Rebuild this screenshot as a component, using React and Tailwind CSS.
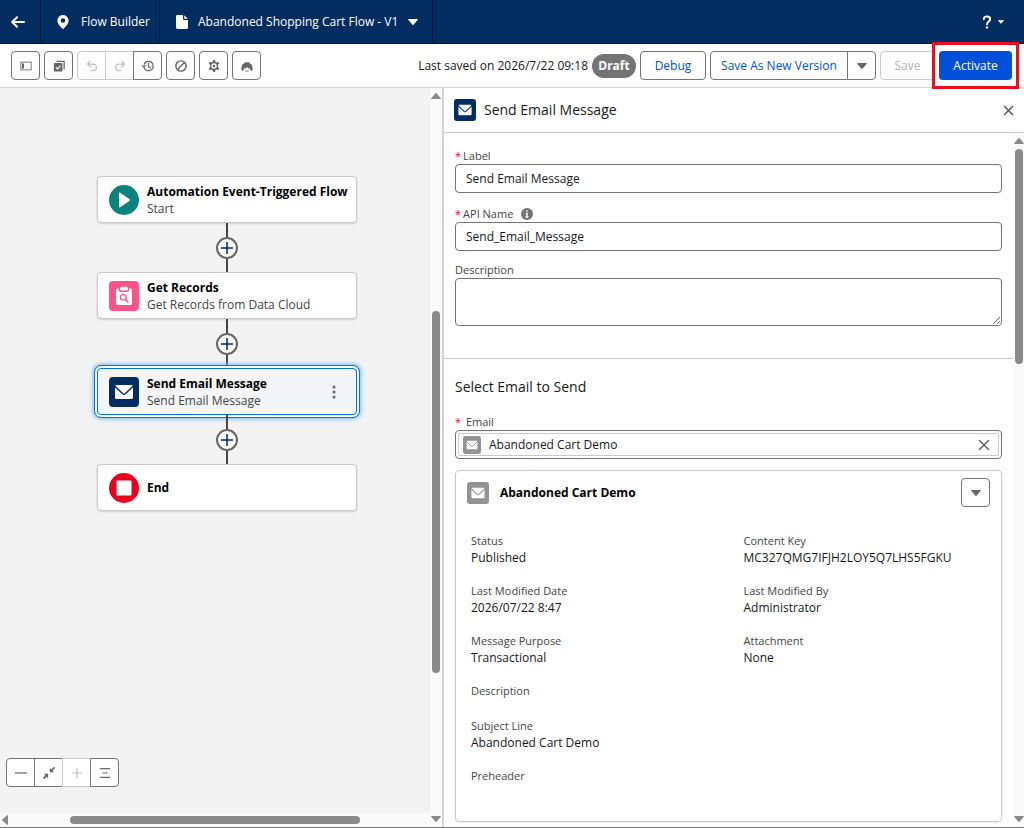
import React, { useState } from 'react';

const emailFields = [
  [{ label: 'Status', value: 'Published' }, { label: 'Content Key', value: 'MC327QMG7IFJH2LOY5Q7LHS5FGKU' }],
  [{ label: 'Last Modified Date', value: '2026/07/22 8:47' }, { label: 'Last Modified By', value: 'Administrator' }],
  [{ label: 'Message Purpose', value: 'Transactional' }, { label: 'Attachment', value: 'None' }],
  [{ label: 'Description', value: '' }],
  [{ label: 'Subject Line', value: 'Abandoned Cart Demo' }],
  [{ label: 'Preheader', value: '' }],
];

function Caret({ className }) {
  return (
    <svg viewBox="0 0 10 6" className={className} fill="currentColor" aria-hidden="true">
      <path d="M.6 0h8.8c.5 0 .7.5.4.8L5.5 5.7c-.3.3-.7.3-1 0L.2.8C-.1.5.1 0 .6 0z" />
    </svg>
  );
}

function CloseIcon({ className }) {
  return (
    <svg viewBox="0 0 12 12" className={className} fill="none" stroke="currentColor" strokeWidth="1.6" strokeLinecap="round" aria-hidden="true">
      <path d="M1.5 1.5l9 9M10.5 1.5l-9 9" />
    </svg>
  );
}

function EmailIcon({ className }) {
  return (
    <svg viewBox="0 0 30 30" className={className} aria-hidden="true">
      <rect width="30" height="30" rx="4" fill="currentColor" />
      <rect x="6" y="8" width="18" height="14" rx="1.6" fill="#fff" />
      <path d="M5.5 9l8.3 7.8c.7.6 1.7.6 2.4 0L24.5 9" fill="none" stroke="currentColor" strokeWidth="1.5" />
    </svg>
  );
}

function StartIcon() {
  return (
    <svg viewBox="0 0 30 30" className="size-[30px] shrink-0" aria-hidden="true">
      <circle cx="15" cy="15" r="15" fill="#0b827c" />
      <path d="M10 8.3c0-.7.7-1 1.2-.6l9.3 6.6c.5.4.5 1 0 1.4l-9.3 6.6c-.5.4-1.2.1-1.2-.6z" fill="#fff" />
    </svg>
  );
}

function RecordsIcon() {
  return (
    <svg viewBox="0 0 30 30" className="size-[30px] shrink-0" aria-hidden="true">
      <rect width="30" height="30" rx="4" fill="#ff538a" />
      <path d="M8.5 7.5h1.2v1.6c0 1 .8 1.8 1.8 1.8h7c1 0 1.8-.8 1.8-1.8V7.5h1.2c.8 0 1.5.7 1.5 1.5v13.5c0 .8-.7 1.5-1.5 1.5h-13C7.7 24 7 23.3 7 22.5V9c0-.8.7-1.5 1.5-1.5z" fill="#fff" />
      <path d="M12.5 5.8h5c.8 0 1.4.6 1.4 1.4v1c0 .8-.6 1.4-1.4 1.4h-5c-.8 0-1.4-.6-1.4-1.4v-1c0-.8.6-1.4 1.4-1.4z" fill="#fff" />
      <circle cx="14.3" cy="16.3" r="2.9" fill="none" stroke="#ff538a" strokeWidth="1.3" />
      <path d="M16.5 18.5l2.5 2.7" stroke="#ff538a" strokeWidth="1.4" strokeLinecap="round" />
    </svg>
  );
}

function EndIcon() {
  return (
    <svg viewBox="0 0 30 30" className="size-[30px] shrink-0" aria-hidden="true">
      <circle cx="15" cy="15" r="15" fill="#ea001e" />
      <rect x="7.5" y="7.5" width="15" height="15" rx="1" fill="#fff" />
    </svg>
  );
}

function IconButton({ label, disabled, className = '', children }) {
  return (
    <button
      type="button"
      aria-label={label}
      disabled={disabled}
      className={`flex h-[29px] w-[29px] items-center justify-center border bg-white ${disabled ? 'border-[#c9c9c9] text-[#c0c0c0]' : 'border-[#747474] text-[#666666]'} ${className}`}
    >
      <svg viewBox="0 0 14 14" className="size-3" fill="none" stroke="currentColor" strokeWidth="1.4" aria-hidden="true">
        {children}
      </svg>
    </button>
  );
}

function Header() {
  return (
    <header className="flex h-11 shrink-0 items-stretch border-b border-[#001639] bg-[#032d60] text-white">
      <a href="#back" aria-label="Back" className="flex w-[41px] items-center justify-center border-r border-[#001a42] pr-1">
        <svg viewBox="0 0 14 12" className="h-3 w-3.5" fill="none" stroke="currentColor" strokeWidth="2" strokeLinecap="round" strokeLinejoin="round" aria-hidden="true">
          <path d="M13 6H1.5M6 1.2L1.2 6 6 10.8" />
        </svg>
      </a>
      <a href="#flow-builder" className="flex w-[119px] items-center gap-3 border-r border-[#001a42] pl-4">
        <svg viewBox="0 0 12 14" className="h-3.5 w-3 shrink-0" fill="currentColor" aria-hidden="true">
          <path fillRule="evenodd" d="M6 0C2.9 0 .4 2.5.4 5.6c0 3.6 3.3 6.5 4.8 8 .5.5 1.1.5 1.6 0 1.500-1.500 4.800-4.400 4.800-8C11.6 2.500 9.100 0 6 0zm0 7.800a2.300 2.300 0 110-4.600 2.300 2.300 0 010 4.600z" />
        </svg>
        Flow Builder
      </a>
      <button type="button" className="flex items-center border-r border-[#001a42] pr-3.5 pl-4">
        <svg viewBox="0 0 12 14" className="h-3.5 w-3 shrink-0" fill="currentColor" aria-hidden="true">
          <path d="M1.4 0H7v3.8C7 4.5 7.500 5 8.200 5H12v7.600c0 .8-.6 1.400-1.400 1.400H1.400C.6 14 0 13.400 0 12.600V1.400C0 .6.6 0 1.400 0z" />
          <path d="M8.2.2l3.600 3.600H8.600a.4.4 0 01-.4-.4z" />
        </svg>
        <span className="ml-2.5 whitespace-nowrap">Abandoned Shopping Cart Flow - V1</span>
        <Caret className="ml-2.5 h-1.5 w-2.5" />
      </button>
      <button type="button" aria-label="Help" className="ml-auto flex items-center gap-1.5 pr-5">
        <svg viewBox="0 0 10 14" className="h-3.5 w-2.5" fill="none" stroke="currentColor" strokeWidth="2" aria-hidden="true">
          <path d="M1.8 4.2C1.8 2.3 3.2 1.4 5 1.4s3.2 1 3.2 2.7C8.2 6.5 5 6.6 5 9.2" strokeLinecap="round" />
          <circle cx="5" cy="12.4" r="1.2" fill="currentColor" stroke="none" />
        </svg>
        <Caret className="h-1 w-1.5" />
      </button>
    </header>
  );
}

function Toolbar() {
  return (
    <div className="flex h-11 shrink-0 items-center justify-between border-b border-[#d4d4d4] bg-white pr-3 pl-[11px]">
      <div className="flex gap-1">
        <IconButton label="Toggle toolbox" className="rounded">
          <rect x="1" y="2.5" width="12" height="9" strokeWidth="1" />
          <path d="M3.5 4v6" strokeWidth="2.4" />
        </IconButton>
        <IconButton label="Select elements" className="rounded">
          <path d="M4 1.5h9V11" />
          <rect x="1" y="3.5" width="10" height="10" rx="1" fill="currentColor" stroke="none" />
          <path d="M3.4 8.5l1.9 1.9 3.5-3.8" stroke="#fff" />
        </IconButton>
        <div className="flex">
          <IconButton label="Undo" disabled className="rounded-l">
            <path d="M5 1.5L1.8 4.7 5 7.9M2 4.7h6.2a3.9 3.9 0 010 7.8H6" strokeLinecap="round" strokeLinejoin="round" />
          </IconButton>
          <IconButton label="Redo" disabled className="-ml-px">
            <path d="M9 1.5l3.2 3.2L9 7.9M12 4.7H5.8a3.9 3.9 0 000 7.8H8" strokeLinecap="round" strokeLinejoin="round" />
          </IconButton>
          <IconButton label="Version history" className="-ml-px rounded-r">
            <path d="M2.3 8.3A5.4 5.4 0 107.6 1.6 5.4 5.4 0 002.6 5M.4 6.3l1.9 2 2-2M7.5 4v3.5l2 1.6" strokeLinecap="round" strokeLinejoin="round" />
          </IconButton>
        </div>
        <IconButton label="Show errors" className="rounded">
          <circle cx="7" cy="7" r="6" strokeWidth="1.7" />
          <path d="M3 11l8-8" strokeWidth="1.7" />
        </IconButton>
        <IconButton label="Settings" className="rounded">
          <path fillRule="evenodd" d="M5.8 0h2.4l.4 2 1.3.8 2-.7 1.2 2.1-1.5 1.4v2.8l1.5 1.4-1.2 2.1-2-.7-1.3.8-.4 2H5.8l-.4-2-1.3-.8-2 .7L.9 9.8l1.5-1.4V5.6L.9 4.2l1.2-2.1 2 .7L5.4 2zM7 3.8a3.2 3.2 0 100 6.4 3.2 3.2 0 000-6.4z" fill="currentColor" stroke="none" />
          <circle cx="7" cy="7" r="1.6" fill="currentColor" stroke="none" />
        </IconButton>
        <IconButton label="Einstein" className="rounded">
          <path d="M1.5 12.5C-.3 11.2.2 9 1 8.2.6 6 2 4.6 3.3 4.5 4 2.7 6 2.3 7 3c1-.7 3-.3 3.7 1.5C12 4.6 13.4 6 13 8.2c.8.8 1.3 3-.5 4.3l-1.8-.3c.3-1 .2-2-.4-2.7-1.400.1-2.400-.2-3.100-.9-.8.7-2 1-3.500.9-.6.7-.7 1.700-.4 2.700z" fill="currentColor" stroke="none" />
          <path d="M5 10v1.200M9 10v1.200M5 13h4" strokeWidth="1" />
        </IconButton>
      </div>

      <div className="flex items-center gap-1">
        <span className="whitespace-nowrap text-[#181818]">Last saved on 2026/7/22 09:18</span>
        <span className="flex h-6 w-11 items-center justify-center rounded-full bg-[#747474] font-bold text-white">Draft</span>
        <button type="button" className="h-[29px] w-[66px] rounded border border-[#747474] text-[#0250d9]">Debug</button>
        <div className="flex">
          <button type="button" className="h-[29px] w-[138px] rounded-l border border-[#747474] whitespace-nowrap text-[#0250d9]">
            Save As New Version
          </button>
          <button type="button" aria-label="More save options" className="-ml-px flex h-[29px] w-[29px] items-center justify-center rounded-r border border-[#747474] text-[#666666]">
            <Caret className="h-1.5 w-2.5" />
          </button>
        </div>
        <button type="button" disabled className="h-[29px] w-[55px] rounded border border-[#c9c9c9] text-[#b5b5b5]">Save</button>
        <div className="relative">
          <button type="button" className="h-[29px] w-[73px] rounded bg-[#0250d9] text-white">Activate</button>
          {/* Highlight around the primary action */}
          <div className="pointer-events-none absolute -inset-x-[7px] -inset-y-[9px] border-[3px] border-[#e8101c]" />
        </div>
      </div>
    </div>
  );
}

function FlowNode({ icon, title, subtitle, selected }) {
  return (
    <div
      className={`flex h-[47px] w-[260px] shrink-0 items-center gap-2 rounded border pr-4 pl-[11px] ${
        selected
          ? 'border-[#0176d3] bg-[#f3f5f7] ring-2 ring-white outline-1 outline-offset-2 outline-[#0176d3] shadow-[0_0_4px_4px_#7ab8f5]'
          : 'border-[#c9c9c9] bg-white shadow-[0_1px_2px_#00000026]'
      }`}
    >
      {icon}
      <div className="grow leading-[17px]">
        <div className="font-bold whitespace-nowrap text-black">{title}</div>
        {subtitle && <div className="whitespace-nowrap text-[#444444]">{subtitle}</div>}
      </div>
      {selected && (
        <button type="button" aria-label="Element actions" className="flex w-3 justify-center text-[#666666]">
          <svg viewBox="0 0 4 14" className="h-3.5 w-1" fill="currentColor" aria-hidden="true">
            <circle cx="2" cy="2" r="1.5" />
            <circle cx="2" cy="7" r="1.5" />
            <circle cx="2" cy="12" r="1.5" />
          </svg>
        </button>
      )}
    </div>
  );
}

function Connector() {
  return (
    <div className="flex h-[49px] shrink-0 flex-col items-center">
      <div className="w-0.5 grow bg-[#444444]" />
      <button type="button" aria-label="Add element" className="flex size-[22px] items-center justify-center rounded-full border-2 border-[#666666] bg-white text-[#001e8a]">
        <svg viewBox="0 0 14 14" className="size-3.5" stroke="currentColor" strokeWidth="1.5" aria-hidden="true">
          <path d="M7 1v12M1 7h12" />
        </svg>
      </button>
      <div className="w-0.5 grow bg-[#444444]" />
    </div>
  );
}

function Canvas() {
  return (
    <div className="flex min-w-0">
      <div className="flex min-w-0 grow flex-col">
        <main className="relative min-h-0 grow overflow-hidden bg-[#f3f3f3] pt-[88px] pl-6">
          <div className="flex flex-col items-center">
            <FlowNode icon={<StartIcon />} title="Automation Event-Triggered Flow" subtitle="Start" />
            <Connector />
            <FlowNode icon={<RecordsIcon />} title="Get Records" subtitle="Get Records from Data Cloud" />
            <Connector />
            <FlowNode
              selected
              icon={<EmailIcon className="size-[30px] shrink-0 text-[#032d60]" />}
              title="Send Email Message"
              subtitle="Send Email Message"
            />
            <Connector />
            <FlowNode icon={<EndIcon />} title="End" />
          </div>
          <div className="absolute bottom-[26px] left-1.5 flex">
            <IconButton label="Zoom out" className="rounded-l">
              <path d="M0 7h14" />
            </IconButton>
            <IconButton label="Zoom to fit" className="-ml-px">
              <path d="M13.5.5l-4 4M.5 13.5l4-4" strokeWidth="2" />
              <path d="M8 1v5h5zM6 13V8H1z" fill="currentColor" stroke="none" />
            </IconButton>
            <IconButton label="Zoom in" disabled className="-ml-px">
              <path d="M7 1v12M1 7h12" />
            </IconButton>
            <IconButton label="Auto-layout" className="-ml-px rounded-r">
              <path d="M1 2h12M4 7h6M1 12h12" />
            </IconButton>
          </div>
        </main>
        <div className="flex h-3.5 shrink-0 items-center bg-[#fafafa] text-[#8a8a8a]">
          <Caret className="h-1.5 w-2.5 rotate-90" />
          <div className="flex-[60]" />
          <div className="h-2 flex-[290] rounded-full bg-[#8a8a8a]" />
          <div className="flex-[70]" />
        </div>
      </div>
      <div className="flex w-3 shrink-0 flex-col items-center bg-[#fafafa] py-1 text-[#8a8a8a]">
        <Caret className="my-px h-1.5 w-2.5 shrink-0 rotate-180" />
        <div className="flex-[211]" />
        <div className="w-2 flex-[363] rounded-full bg-[#8a8a8a]" />
        <div className="flex-[142]" />
        <Caret className="my-px h-1.5 w-2.5 shrink-0" />
      </div>
    </div>
  );
}

function Required() {
  return <span className="mr-0.5 text-[#ea001e]">*</span>;
}

function EmailCard() {
  return (
    <section className="mt-[11px] rounded border border-[#c9c9c9] px-[11px] pt-[7px] pb-[35px] shadow-[0_1px_2px_#00000014]">
      <div className="flex items-center">
        <EmailIcon className="size-[22px] text-[#939393]" />
        <h3 className="ml-[11px] grow text-xs font-bold text-black">Abandoned Cart Demo</h3>
        <button type="button" aria-label="Email actions" className="flex size-[29px] items-center justify-center rounded border border-[#747474] text-[#666666]">
          <Caret className="h-1.5 w-2.5" />
        </button>
      </div>
      <dl className="mt-[25px] flex flex-col gap-4 px-1">
        {emailFields.map((row) => (
          <div key={row[0].label} className="grid grid-cols-2 gap-x-[30px]">
            {row.map((field) => (
              <div key={field.label} className="leading-[17px]">
                <dt className="text-[11px] leading-[17px] text-[#444444]">{field.label}</dt>
                <dd className="min-h-0.5 text-[#181818]">{field.value}</dd>
              </div>
            ))}
          </div>
        ))}
      </dl>
    </section>
  );
}

function PropertiesPanel() {
  const [label, setLabel] = useState('Send Email Message');
  const [apiName, setApiName] = useState('Send_Email_Message');
  const [description, setDescription] = useState('');
  const [email, setEmail] = useState('Abandoned Cart Demo');

  return (
    <aside className="flex min-h-0 min-w-0 flex-col border-l-2 border-[#d4d4d4] bg-white">
      <div className="flex h-[45px] shrink-0 items-center border-b border-[#c9c9c9] px-2.5">
        <EmailIcon className="size-[22px] text-[#032d60]" />
        <h2 className="ml-2 grow text-sm text-[#181818]">Send Email Message</h2>
        <button type="button" aria-label="Close" className="text-[#666666]">
          <CloseIcon className="size-[11px]" />
        </button>
      </div>

      <div className="flex min-h-0 grow">
        <div className="min-w-0 grow overflow-hidden">
          <div className="border-b border-[#c9c9c9] px-[11px] pt-3.5 pb-8">
            <label htmlFor="label" className="block h-[17px] text-[11px] leading-[17px] text-[#444444]"><Required />Label</label>
            <input
              id="label"
              value={label}
              onChange={(e) => setLabel(e.target.value)}
              className="block h-[29px] w-full rounded border border-[#747474] px-2.5 text-[#181818]"
            />
            <div className="mt-3 flex h-[17px] items-center gap-2 text-[11px] leading-[17px] text-[#444444]">
              <label htmlFor="api-name"><Required />API Name</label>
              <svg viewBox="0 0 12 12" className="size-3" aria-hidden="true">
                <circle cx="6" cy="6" r="6" fill="#747474" />
                <path d="M6 2.2v1.6M4.8 5.5H6v3M4.6 9h2.8" stroke="#fff" strokeWidth="1.4" fill="none" />
              </svg>
            </div>
            <input
              id="api-name"
              value={apiName}
              onChange={(e) => setApiName(e.target.value)}
              className="block h-[29px] w-full rounded border border-[#747474] px-2.5 text-[#181818]"
            />
            <label htmlFor="description" className="mt-2.5 block h-[17px] text-[11px] leading-[17px] text-[#444444]">Description</label>
            <textarea
              id="description"
              value={description}
              onChange={(e) => setDescription(e.target.value)}
              className="block h-12 w-full resize rounded border border-[#747474] px-2.5"
            />
          </div>

          <div className="px-[11px] pt-[18px] pb-1">
            <h3 className="text-sm leading-5 text-[#181818]">Select Email to Send</h3>
            <label htmlFor="email" className="mt-4 block h-[17px] text-[11px] leading-[17px] text-[#444444]"><Required /> Email</label>
            <div className="flex h-[29px] rounded border border-[#747474] p-0.5">
              <div className="flex grow items-center rounded-xs border border-[#c9c9c9] pr-2 pl-1">
                <EmailIcon className="size-[18px] text-[#939393]" />
                <input
                  id="email"
                  value={email}
                  onChange={(e) => setEmail(e.target.value)}
                  className="ml-2 min-w-0 grow text-[#181818]"
                />
                <button type="button" aria-label="Clear email" className="text-[#666666]">
                  <CloseIcon className="size-3" />
                </button>
              </div>
            </div>
            <EmailCard />
          </div>
        </div>
        <div className="flex w-[11px] shrink-0 flex-col items-center bg-[#fafafa] py-1 text-[#8a8a8a]">
          <Caret className="my-px h-1.5 w-2.5 shrink-0 rotate-180" />
          <div className="flex-[4]" />
          <div className="w-2 flex-[216] rounded-full bg-[#8a8a8a]" />
          <div className="flex-[453]" />
          <Caret className="my-px h-1.5 w-2.5 shrink-0" />
        </div>
      </div>
    </aside>
  );
}

export default function App() {
  return (
    <div className="flex h-screen flex-col border-b border-[#747474] font-['Open_Sans','Noto_Sans',sans-serif] text-xs">
      <Header />
      <Toolbar />
      <div className="grid min-h-0 grow grid-cols-[442fr_582fr]">
        <Canvas />
        <PropertiesPanel />
      </div>
    </div>
  );
}
